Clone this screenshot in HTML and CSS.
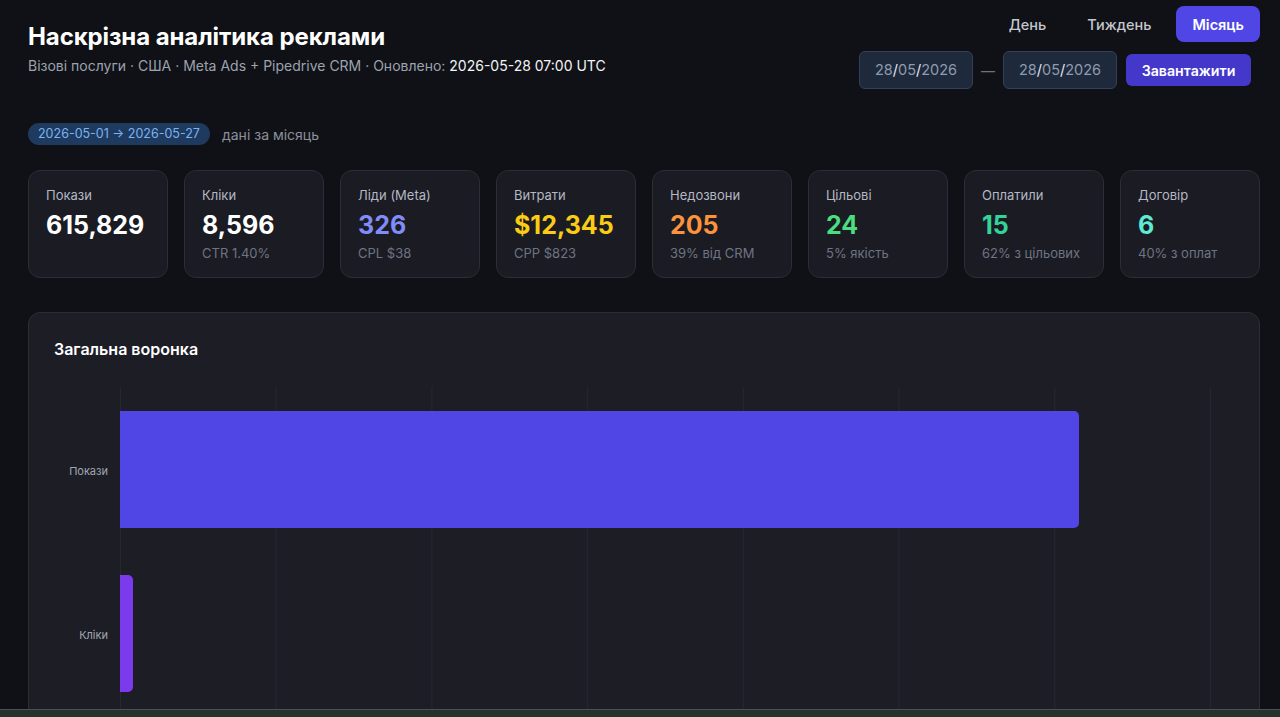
FILE: index.html
```html
<!DOCTYPE html>
<html lang="uk">
<head>
    <meta charset="UTF-8">
    <meta name="viewport" content="width=device-width, initial-scale=1.0">
    <title>Наскрізна аналітика реклами</title>
    <link rel="stylesheet" href="styles.css">
</head>
<body>
    <div class="page">
        <header class="header">
            <div class="heading">
                <h1>Наскрізна аналітика реклами</h1>
                <p class="subtitle">Візові послуги · США · Meta Ads + Pipedrive CRM · Оновлено: <span class="updated">2026-05-28 07:00 UTC</span></p>
            </div>
            <div class="controls">
                <div class="tabs">
                    <button class="tab">День</button>
                    <button class="tab">Тиждень</button>
                    <button class="tab active">Місяць</button>
                </div>
                <div class="range">
                    <div class="date-input">28<span class="sep">/</span>05<span class="sep">/</span>2026</div>
                    <span class="dash">—</span>
                    <div class="date-input">28<span class="sep">/</span>05<span class="sep">/</span>2026</div>
                    <button class="load">Завантажити</button>
                </div>
            </div>
        </header>

        <div class="period">
            <span class="badge">2026-05-01 → 2026-05-27</span>
            <span class="period-note">дані за місяць</span>
        </div>

        <div class="stats">
            <div class="card">
                <div class="card-label">Покази</div>
                <div class="card-value">615,829</div>
            </div>
            <div class="card">
                <div class="card-label">Кліки</div>
                <div class="card-value">8,596</div>
                <div class="card-sub">CTR 1.40%</div>
            </div>
            <div class="card">
                <div class="card-label">Ліди (Meta)</div>
                <div class="card-value indigo">326</div>
                <div class="card-sub">CPL $38</div>
            </div>
            <div class="card">
                <div class="card-label">Витрати</div>
                <div class="card-value yellow">$12,345</div>
                <div class="card-sub">CPP $823</div>
            </div>
            <div class="card">
                <div class="card-label">Недозвони</div>
                <div class="card-value orange">205</div>
                <div class="card-sub">39% від CRM</div>
            </div>
            <div class="card">
                <div class="card-label">Цільові</div>
                <div class="card-value green">24</div>
                <div class="card-sub">5% якість</div>
            </div>
            <div class="card">
                <div class="card-label">Оплатили</div>
                <div class="card-value emerald">15</div>
                <div class="card-sub">62% з цільових</div>
            </div>
            <div class="card">
                <div class="card-label">Договір</div>
                <div class="card-value teal">6</div>
                <div class="card-sub">40% з оплат</div>
            </div>
        </div>

        <section class="panel">
            <h2>Загальна воронка</h2>
            <div class="chart">
                <div class="chart-row">
                    <div class="chart-label">Покази</div>
                    <div class="chart-track"><div class="bar bar-views" style="width: 87.98%"></div></div>
                </div>
                <div class="chart-row">
                    <div class="chart-label">Кліки</div>
                    <div class="chart-track"><div class="bar bar-clicks" style="width: 1.23%"></div></div>
                </div>
            </div>
        </section>
    </div>
    <div class="desktop-edge"></div>
</body>
</html>
```

FILE: styles.css
```css
body {
    margin: 0;
    background-color: #101116;
    font-family: Inter, "Noto Sans", sans-serif;
    color: #f3f4f6;
    overflow: hidden;
    height: 717px;
}
.page {
    padding: 6px 20px 0 28px;
}
.header {
    display: flex;
    justify-content: space-between;
    align-items: flex-start;
}
.heading {
    margin-top: 15px;
}
h1 {
    margin: 0;
    font-size: 24px;
    line-height: 32px;
    font-weight: 700;
    color: #ffffff;
    letter-spacing: -0.1px;
}
.subtitle {
    margin: 2px 0 0;
    font-size: 14px;
    line-height: 22px;
    color: #9ca3af;
}
.updated {
    color: #f3f4f6;
}
.controls {
    display: flex;
    flex-direction: column;
    align-items: flex-end;
    gap: 9px;
}
.tabs {
    display: flex;
    gap: 9px;
}
button {
    font-family: inherit;
    border: none;
    cursor: pointer;
}
.tab {
    background: transparent;
    color: #c4c7cf;
    font-size: 14.5px;
    font-weight: 500;
    height: 36px;
    padding: 0 16px;
    border-radius: 8px;
}
.tab.active {
    background: #4f46e5;
    color: #ffffff;
    font-weight: 600;
}
.range {
    display: flex;
    align-items: center;
    gap: 8px;
    margin-right: 9px;
}
.date-input {
    width: 114px;
    box-sizing: border-box;
    height: 38px;
    line-height: 36px;
    text-align: center;
    background: #1e293b;
    border: 1px solid #334155;
    border-radius: 6px;
    color: #8e9bb0;
    font-size: 14.5px;
}
.date-input .sep {
    color: #e5e7eb;
}
.dash {
    color: #6b7280;
    font-size: 14px;
}
.load {
    height: 32px;
    width: 125px;
    margin-left: 1px;
    background: #4338ca;
    color: #ffffff;
    font-size: 14.2px;
    font-weight: 600;
    border-radius: 6px;
}
.period {
    display: flex;
    align-items: center;
    gap: 12px;
    margin-top: 34px;
}
.badge {
    background: #1e3a5f;
    color: #7fb2f0;
    font-size: 12.5px;
    line-height: 22px;
    padding: 0 10px;
    border-radius: 11px;
}
.period-note {
    color: #8b909b;
    font-size: 14px;
}
.stats {
    display: grid;
    grid-template-columns: repeat(8, 1fr);
    gap: 16px;
    margin-top: 25px;
}
.card {
    height: 108px;
    box-sizing: border-box;
    padding: 15px 17px;
    background: #1a1b23;
    border: 1px solid #2b2d37;
    border-radius: 12px;
}
.card-label {
    font-size: 13px;
    line-height: 18px;
    color: #b4b8c2;
}
.card-value {
    margin-top: 5px;
    font-size: 25px;
    line-height: 32px;
    font-weight: 700;
    color: #ffffff;
}
.card-sub {
    margin-top: 3px;
    font-size: 13px;
    line-height: 18px;
    color: #6e7482;
}
.indigo { color: #818cf8; }
.yellow { color: #facc15; }
.orange { color: #fb923c; }
.green { color: #4ade80; }
.emerald { color: #34d399; }
.teal { color: #5eead4; }
.panel {
    margin-top: 34px;
    padding: 24px 25px 0;
    background: #1c1d25;
    border: 1px solid #2b2d37;
    border-radius: 12px;
    height: 600px;
}
h2 {
    margin: 0;
    font-size: 16px;
    line-height: 24px;
    font-weight: 600;
    color: #ffffff;
}
.chart {
    margin-top: 26px;
}
.chart-row {
    display: flex;
    height: 164px;
}
.chart-label {
    width: 54px;
    padding: 4px 11px 0 0;
    text-align: right;
    align-self: center;
    font-size: 11px;
    color: #a3a7b1;
}
.chart-track {
    width: 1090px;
    margin-left: 1px;
    border-right: 1px solid #252731;
    background-image: linear-gradient(to right, #252731 1px, transparent 1px);
    background-size: calc(100% / 7) 100%;
    display: flex;
    align-items: center;
}
.bar {
    height: 117px;
    border-radius: 0 5px 5px 0;
}
.bar-views { background: #4f46e5; }
.bar-clicks { background: #7c3aed; }
.desktop-edge {
    position: fixed;
    left: 0;
    right: 0;
    bottom: 0;
    height: 7px;
    background: #26332d;
    border-top: 1px solid #4d5057;
}
```
